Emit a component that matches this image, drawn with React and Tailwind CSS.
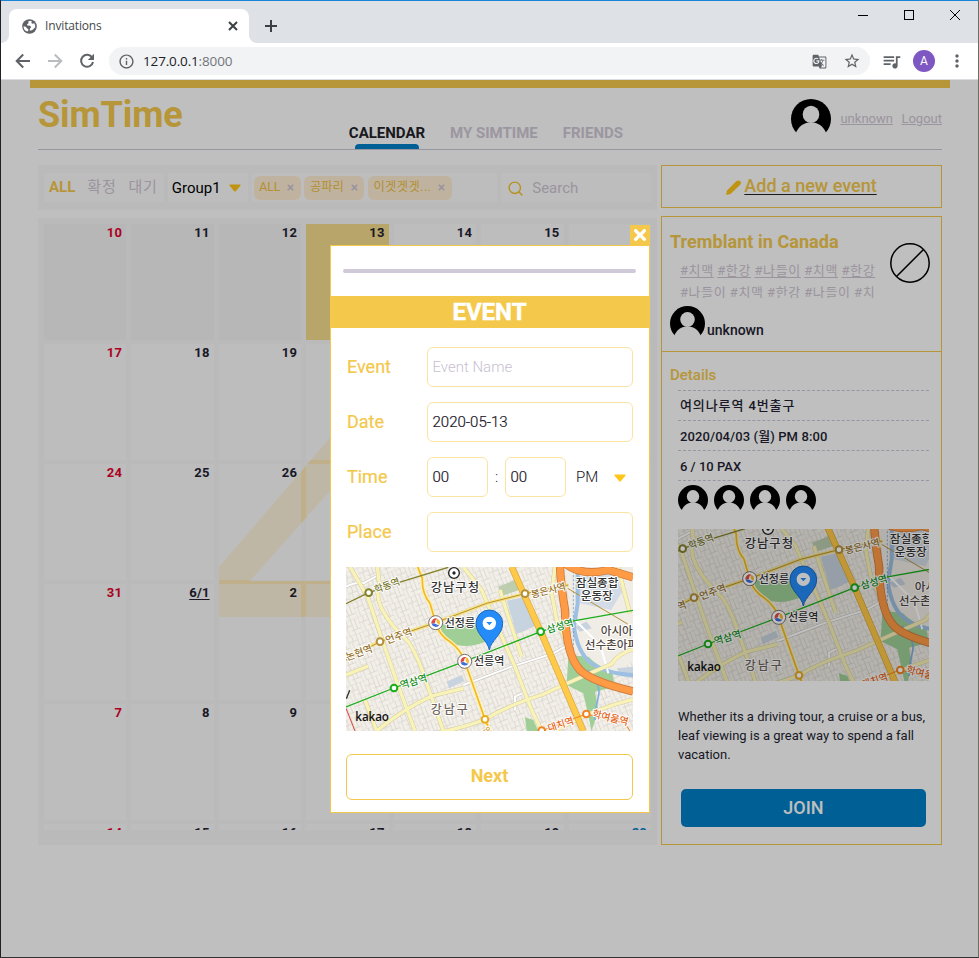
import React from "react";
import {
  MdInfoOutline,
  MdGTranslate,
  MdStarBorder,
  MdQueueMusic,
  MdMoreVert,
} from "react-icons/md";
import { FaTimes } from "react-icons/fa";
import { FiSearch } from "react-icons/fi";

function Globe() {
  return (
    <svg className="size-[15px]" viewBox="0 0 15 15">
      <circle cx="7.5" cy="7.500" r="7.300" fill="#5f6368" />
      <path d="M8 1.800L6.200 2.600L6.600 4.200L5 5.200L5.400 6.600L8.200 6.800L9.200 8.200L8 9.400L7.600 11.400Q9.600 11.800 11 10.400L13.200 8.200Q13.500 6 12.300 4.300L10.600 4.800L9.200 4L10 2.400Z" fill="#fff" />
      <path d="M1.500 7.200L3.800 7.800L5.200 9.400L6.400 10.200L6 12.600Q1.500 12 1.500 7.200Z" fill="#fff" />
    </svg>
  );
}

function LineIcon({ d, className }) {
  return (
    <svg className={className} viewBox="0 0 20 20" fill="none" stroke="currentColor" strokeWidth="2">
      <path d={d} />
    </svg>
  );
}

function BrowserChrome() {
  return (
    <div className="h-[80px] shrink-0 border-t border-[#1883d7] bg-[#dee1e6] font-['Open_Sans',sans-serif]">
      <div className="flex h-[42px] items-end">
        <div className="flex h-[42px] w-[8px] items-end bg-white">
          <div className="h-full w-full rounded-br-[8px] bg-[#dee1e6]" />
        </div>
        <div className="flex h-[34px] w-[240px] items-center rounded-t-[8px] bg-white pl-[13px] pr-[6px]">
          <Globe />
          <span className="ml-[8px] flex-1 text-[12px] tracking-[-0.15px] text-[#45494d]">Invitations</span>
          <LineIcon className="size-[20px] text-[#3c4043]" d="M6 6L14 14M14 6L6 14" />
        </div>
        <div className="h-[34px] w-[8px] bg-white">
          <div className="h-full w-full rounded-bl-[8px] bg-[#dee1e6]" />
        </div>
        <div className="flex h-[34px] items-center pl-[4px]">
          <LineIcon className="size-[20px] text-[#3c4043]" d="M10 4V16M4 10H16" />
        </div>
        <div className="ml-auto flex h-[42px] items-start gap-[36px] pr-[18px] pt-[9px]">
          <svg className="size-[10px]" viewBox="0 0 10 10"><path d="M0 5.5H10" stroke="#000" /></svg>
          <svg className="size-[10px]" viewBox="0 0 10 10"><rect x=".5" y=".5" width="9" height="9" fill="none" stroke="#000" /></svg>
          <svg className="size-[10px]" viewBox="0 0 10 10"><path d="M0 0L10 10M10 0L0 10" stroke="#000" /></svg>
        </div>
      </div>
      <div className="flex h-[37px] items-center border-b border-[#dadce0] bg-white text-[#5f6368]">
        <LineIcon className="ml-[12px] size-[20px]" d="M17 10H4M10.200 3.500L3.700 10L10.200 16.500" />
        <LineIcon className="ml-[12px] size-[20px] text-[#babcbe]" d="M3 10H16M9.800 3.500L16.300 10L9.800 16.500" />
        <svg className="ml-[12px] size-[20px]" viewBox="0 0 20 20">
          <path d="M15.200 6.600A6 6 0 1 0 16 11" fill="none" stroke="currentColor" strokeWidth="2" />
          <path d="M17 2.800V9H10.800Z" fill="currentColor" />
        </svg>
        <div className="ml-[12px] flex h-[28px] w-[761px] items-center rounded-full bg-[#f1f3f4] pl-[9px] pr-[9px]">
          <MdInfoOutline className="size-[17px]" />
          <span className="ml-[8px] text-[13.5px] tracking-[-0.15px] text-[#202124]">
            127.0.0.1<span className="text-[#72767a]">:8000</span>
          </span>
          <MdGTranslate className="ml-auto size-[15px]" />
          <MdStarBorder className="ml-[16px] size-[18px]" />
        </div>
        <MdQueueMusic className="ml-[11px] size-[21px]" />
        <div className="ml-[11px] flex size-[22px] items-center justify-center rounded-full bg-[#7e57c2] font-[Roboto] text-[12px] text-white">A</div>
        <MdMoreVert className="ml-[12px] size-[20px]" />
      </div>
    </div>
  );
}

function Avatar({ className }) {
  return (
    <svg className={className} viewBox="0 0 40 40">
      <circle cx="20" cy="20" r="20" fill="#000" />
      <ellipse cx="20" cy="15.4" rx="8.3" ry="8.6" fill="#fff" />
      <path d="M4.600 34.500C8 26.500 13 23.400 20 23.400S32 26.500 35.400 34.500L31 41H9Z" fill="#fff" />
    </svg>
  );
}

function Caret({ className }) {
  return (
    <svg className={className} viewBox="0 0 12 8">
      <path d="M1 .5H11Q12 .8 11.4 1.8L7 7Q6 8 5 7L.6 1.8Q0 .8 1 .5Z" fill="#ffc61a" />
    </svg>
  );
}

function Station({ x, y, color }) {
  return <circle cx={x} cy={y} r="10" fill="#fff" stroke={color} strokeWidth="6" />;
}

function Transfer({ x, y }) {
  return (
    <g transform={`translate(${x} ${y})`}>
      <circle r="21" fill="#fff" stroke="#766f68" strokeWidth="3" />
      <path d="M-12 4A13 13 0 0 1 5 -12Q-3 -8 -2 0Q-6 1 -12 4Z" fill="#e04b45" />
      <path d="M5 -12A13 13 0 0 1 11 7Q5 4 3 -2Q2 -8 5 -12Z" fill="#f8b830" />
      <path d="M-12 4Q-5 0 -1 3Q4 7 11 7A13 13 0 0 1 -12 4Z" fill="#416fd8" />
    </g>
  );
}

function Label({ x, y, size = 30, color = "#333", rotate = 0, spacing = 0, children }) {
  return (
    <text
      transform={`translate(${x} ${y}) rotate(${rotate})`}
      fontSize={size}
      fill={color}
      stroke="#fff"
      strokeWidth="6"
      strokeLinejoin="round"
      paintOrder="stroke"
      fontWeight="500"
      letterSpacing={spacing}
      className="font-['Noto_Sans_CJK_KR',sans-serif]"
    >
      {children}
    </text>
  );
}

function KakaoMap({ id, viewBox, logoX, logoY, className }) {
  const roads = [
    "M45 21L98 110L145 250L185 365L240 513",
    "M127 21L133 70Q120 110 145 155Q170 200 220 245Q250 290 275 370L325 513",
    "M385 21L440 90L470 160L540 320L590 450L620 513",
    "M495 90L520 170L560 290",
    "M90 420L125 513",
    "M125 513Q200 450 290 408L385 385",
    "M300 520Q400 500 450 478Q520 435 620 405Q740 350 830 312Q850 280 894 268",
    "M660 513Q780 445 894 418",
    "M660 21L650 100L665 180L700 260",
    "M850 21L865 85L885 160",
    "M33 345L100 318",
  ];
  return (
    <svg className={className} viewBox={viewBox}>
      <defs>
        <pattern id={id} width="52" height="46" patternUnits="userSpaceOnUse" patternTransform="rotate(-21)">
          <path d="M0 0H52M0 18H30M22 33H52M0 0V46M16 0V18M30 0V46M42 0V33M12 18V46" fill="none" stroke="#d6d1cb" strokeWidth="2.2" />
        </pattern>
      </defs>
      <g transform="scale(.33333) translate(-33 -21)">
        <rect x="33" y="21" width="861" height="492" fill="#f2efe9" />
        <rect x="33" y="21" width="861" height="492" fill={`url(#${id})`} />
        <path d="M690 21H894V300L850 340L750 330L715 250Z" fill="#f0ede7" />
        <path d="M318 190Q365 210 400 190L440 190L465 238Q420 265 365 255Q335 240 318 220Z" fill="#9fcf96" />
        <path d="M490 80L545 58L553 90L500 108Z" fill="#bdceaf" />
        <path d="M515 122L573 110L607 195L545 222Z" fill="#c8d3e0" />
        <path d="M720 50L840 40L862 95L828 150L735 130Z" fill="#d3dce6" />
        <path d="M720 200L755 185L770 205L735 215ZM335 365L380 345L388 362L342 385Z" fill="#c8d3e0" />
        <path d="M845 325L894 320V355L860 348Z" fill="#c8d3e0" />
        <path d="M700 285L760 290Q795 325 830 330L840 380L780 395L790 450L770 513L745 400L695 375Z" fill="#9fcf96" />
        <path d="M570 472L595 480L610 513H575Z" fill="#9fcf96" />
        <path d="M705 21H728V130L717 200Q728 280 770 310T894 345" fill="none" stroke="#9dbfe2" strokeWidth="12" />
        <path d="M760 330Q800 375 790 410T780 480" fill="none" stroke="#80aede" strokeWidth="5" />
        <path d="M715 21V280" fill="none" stroke="#608ec4" strokeWidth="2" strokeDasharray="7 5" />
        <g fill="none" stroke="#c9c5bf" strokeWidth="9">
          <path d="M385 375L530 320L655 280L690 260L692 205M540 450V410L560 400M33 80Q60 65 85 70L130 45" />
        </g>
        <g fill="none" stroke="#fff" strokeWidth="6">
          <path d="M385 375L530 320L655 280L690 260L692 205M540 450V410L560 400M33 80Q60 65 85 70L130 45M720 180L790 250M800 270L820 340" />
        </g>
        {roads.map((d) => <path key={d} d={d} fill="none" stroke="#d3cda6" strokeWidth="13" />)}
        {roads.map((d) => <path key={d} d={d} fill="none" stroke="#faf3b8" strokeWidth="10" />)}
        <path d="M530 21L617 215L745 513" fill="none" stroke="#d9a63c" strokeWidth="20" />
        <path d="M530 21L617 215L745 513" fill="none" stroke="#ffca4a" strokeWidth="16" />
        <path d="M33 292L135 245L302 188L455 130L570 101L700 75" fill="none" stroke="#f7e27e" strokeWidth="10" />
        <g fill="none" strokeLinejoin="round">
          <path d="M675 21Q678 80 690 150Q692 285 735 330Q770 365 894 394M690 10Q740 50 820 30L894 52" stroke="#cf7d40" strokeWidth="25" />
          <path d="M675 21Q678 80 690 150Q692 285 735 330Q770 365 894 394M690 10Q740 50 820 30L894 52" stroke="#ff9b45" strokeWidth="20" />
          <path d="M248 21L262 55Q260 100 285 130L302 188Q312 225 345 245Q378 270 389 304L450 478L465 513" stroke="#fff2b0" strokeWidth="12" />
          <path d="M248 21L262 55Q260 100 285 130L302 188Q312 225 345 245Q378 270 389 304L450 478L465 513" stroke="#f3b824" strokeWidth="5" />
          <path d="M33 131L101 98L200 65L340 22" stroke="#82812b" strokeWidth="4" />
          <path d="M33 300L135 245L302 188L455 130L570 101L700 75M698 85L878 192" stroke="#b4913a" strokeWidth="3" />
          <path d="M33 441L177 384L389 304L617 215L720 182L894 151" stroke="#1bad1b" strokeWidth="4" />
          <path d="M620 512L754 462L870 490L885 513" stroke="#f58220" strokeWidth="3" />
          <path d="M33 445L60 513" stroke="#d9423c" strokeWidth="3" />
        </g>
        <Label x={122} y={100} size={29} rotate={-20} color="#77772c">학동역</Label>
        <Label x={156} y={252} size={30} rotate={-20} color="#957127">언주역</Label>
        <Label x={37} y={302} size={30} rotate={-20} color="#957127">논현역</Label>
        <Label x={591} y={114} size={29} rotate={-14} color="#957127">봉은사역</Label>
        <Label x={199} y={386} size={30} rotate={-16} color="#128c18">역삼역</Label>
        <Label x={638} y={220} size={30} rotate={-16} color="#128c18">삼성역</Label>
        <Label x={642} y={515} size={29} rotate={-18} color="#e5661a">대치역</Label>
        <Label x={770} y={470} size={30} rotate={14} color="#e5661a">학여울역</Label>
        <Label x={287} y={95} size={37} spacing={3}>강남구청</Label>
        <Label x={329} y={200} size={33}>선정릉</Label>
        <Label x={417} y={316} size={33}>선릉역</Label>
        <Label x={287} y={461} size={36} spacing={6} color="#70645c">강남구</Label>
        <Label x={722} y={81} size={35}>잠실종합</Label>
        <Label x={737} y={120} size={35}>운동장</Label>
        <Label x={797} y={224} size={35} color="#51473f">아시아</Label>
        <Label x={749} y={268} size={35} color="#51473f">선수촌아파</Label>
        <Label x={444} y={506} size={24} rotate={62} color="#d2951c">안</Label>
        <Station x={101} y={98} color="#82812b" />
        <Station x={135} y={245} color="#b4913a" />
        <Station x={570} y={101} color="#b4913a" />
        <Station x={177} y={384} color="#1bad1b" />
        <Station x={617} y={215} color="#1bad1b" />
        <Station x={450} y={478} color="#e8ac20" />
        <Station x={754} y={462} color="#f58220" />
        <Station x={620} y={512} color="#f58220" />
        <circle cx="357" cy="39" r="16" fill="#fff" stroke="#222" strokeWidth="4" />
        <circle cx="357" cy="39" r="5" fill="#222" />
        <path d="M34 416L44 391" stroke="#333" strokeWidth="4" />
        <Transfer x={302} y={188} />
        <Transfer x={389} y={304} />
        <path d="M463 270C458 240 423 225 423 190A40 40 0 0 1 503 190C503 225 468 240 463 270Z" fill="#258bf8" stroke="#1867bd" strokeWidth="3" />
        <circle cx="463" cy="190" r="20" fill="#fff" />
        <path d="M454 186H472L463 196Z" fill="#258bf8" />
        <text x={logoX} y={logoY} fontSize="35" fontWeight="600" letterSpacing="-.3" fill="#111" className="font-['Open_Sans',sans-serif]">kakao</text>
      </g>
    </svg>
  );
}

function Header() {
  return (
    <header className="mx-[8px] flex h-[62px] justify-between border-b border-[#c9c7d6]">
      <h1 className="w-[311px] pt-[5px] text-[36px] font-bold leading-[44px] tracking-[-0.1px] text-[#f3c84b]">SimTime</h1>
      <nav className="flex flex-1 gap-[25px] pt-[35px] text-[15px] font-bold leading-[20px] text-[#d0c9d6]">
        <div className="flex h-[26px] w-[76px] flex-col items-center">
          <span className="text-[#222229]">CALENDAR</span>
          <span className="mt-[1px] h-[5px] w-[64px] rounded-t-[4px] bg-[#0080c8]" />
        </div>
        <span>MY SIMTIME</span>
        <span>FRIENDS</span>
      </nav>
      <div className="flex h-[61px] items-center text-[13px] text-[#cfc6d3]">
        <Avatar className="size-[40px]" />
        <a className="ml-[9px] underline">unknown</a>
        <a className="ml-[8.5px] underline">Logout</a>
      </div>
    </header>
  );
}

function Chip({ children }) {
  return (
    <span className="flex h-[24px] items-center gap-[6px] whitespace-nowrap rounded-[6px] bg-[#ffefd5] px-[5.5px] text-[12.3px] text-[#f0bf45]">
      {children}
      <FaTimes className="size-[9px] text-[#cfc6d3]" />
    </span>
  );
}

function FilterBar() {
  return (
    <div className="flex h-[45px] gap-[4px] bg-[#f9f9f9] px-[6px] py-[8px]">
      <div className="flex w-[120px] items-center gap-[12px] bg-[#fdfdfd] pl-[5px] text-[15px] text-[#cfc6d3]">
        <b className="text-[#f3c84b]">ALL</b>
        <span className="tracking-[0.8px]">확정</span>
        <span className="tracking-[0.8px]">대기</span>
      </div>
      <div className="flex w-[80px] items-center bg-[#fdfdfd] pl-[4px] pt-px text-[15px] text-black">
        Group1
        <Caret className="ml-[8px] h-[8px] w-[12px]" />
      </div>
      <div className="flex w-[246px] items-center gap-[3.5px] bg-[#fdfdfd] pl-[2px]">
        <Chip>ALL</Chip>
        <Chip>공파리</Chip>
        <Chip><span className="tracking-[0.4px]">이겟겟겟...</span></Chip>
      </div>
      <div className="flex w-[150px] items-center gap-[8px] bg-[#fdfdfd] pl-[6px] pt-px text-[15px] text-[#cfc6d3]">
        <FiSearch className="size-[17px] text-[#f3c330]" />
        Search
      </div>
    </div>
  );
}

const days = [
  "10", "11", "12", "13", "14", "15", "16",
  "17", "18", "19", "20", "21", "22", "23",
  "24", "25", "26", "27", "28", "29", "30",
  "31", "6/1", "2", "3", "4", "5", "6",
  "7", "8", "9", "10", "11", "12", "13",
  "14", "15", "16", "17", "18", "19", "20",
];

function dayBackground(i) {
  if (i < 3) return "bg-[#f5f5f5]";
  if (i === 3) return "bg-[#f5dc8d]";
  return "bg-white/50";
}

function dayColor(i) {
  if (i % 7 === 0) return "text-[#e6002d]";
  if (i % 7 === 6) return "text-[#0080c8]";
  return "text-[#241f33]";
}

function Calendar() {
  return (
    <div className="relative mt-[8px] h-[627px] bg-[#f9f9f9] px-[6px] pt-[6px]">
      <svg className="absolute left-[181px] top-[150px] h-[260px] w-[300px]" viewBox="0 0 300 260">
        <path d="M0 199L171 0H218V213H260V249H0ZM31 213H170V56Z" fill="#ffeab8" fillRule="evenodd" />
      </svg>
      <div className="relative h-[606px] overflow-hidden">
        <div className="grid auto-rows-[116px] grid-cols-7 gap-x-[5.300px] gap-y-[4px]">
          {days.map((day, i) => (
            <div key={i} className={`${dayBackground(i)} ${dayColor(i)} pr-[4px] text-right text-[13px] font-bold leading-[18px] tracking-[0.2px]`}>
              <span className={day === "6/1" ? "underline underline-offset-2" : ""}>{day}</span>
            </div>
          ))}
        </div>
      </div>
    </div>
  );
}

function Sidebar() {
  return (
    <aside className="w-[281px]">
      <div className="flex h-[43px] items-center justify-center border border-[#f3c84b] pb-[2px] text-[18px] font-medium text-[#f3c84b]">
        <svg className="mr-[3px] mt-[3px] size-[15px]" viewBox="0 0 15 15">
          <path d="M0 15L1 10.500L10 1.500Q12-.4 14 1T14 5L4.500 14Z" fill="#ffc61a" />
        </svg>
        <a className="underline decoration-[#222] decoration-1 underline-offset-[2px]">Add a new event</a>
      </div>
      <div className="mt-[8px] h-[629px] border border-[#f3c84b]">
        <div className="h-[135px] border-b border-[#f3c84b] px-[8px] pt-[13px]">
          <div className="flex">
            <div className="w-[220px]">
              <h2 className="text-[18px] font-bold leading-[24px] tracking-[0.05px] text-[#f3c84b]">Tremblant in Canada</h2>
              <div className="ml-[10px] mt-[6px] h-[38px] w-[200px] overflow-hidden whitespace-nowrap text-[13px] leading-[22px] tracking-[0.6px] text-[#cfc6d3]">
                <p className="flex gap-[3.500px]">
                  {["#치맥", "#한강", "#나들이", "#치맥", "#한강"].map((tag, i) => <a key={i} className="underline underline-offset-2">{tag}</a>)}
                </p>
                <p className="flex gap-[3.500px]">
                  {["#나들이", "#치맥", "#한강", "#나들이", "#치"].map((tag, i) => <a key={i}>{tag}</a>)}
                </p>
              </div>
            </div>
            <svg className="mt-[13px] size-[40px]" viewBox="0 0 40 40">
              <circle cx="20" cy="20" r="19.2" fill="none" stroke="#000" strokeWidth="1.5" />
              <path d="M33.500 6.500L6.500 33.500" stroke="#000" strokeWidth="1.5" />
            </svg>
          </div>
          <div className="mt-[8px] flex gap-[2px] text-[14px] font-medium text-[#241f33]">
            <Avatar className="size-[35px]" />
            <span className="pt-[14px]">unknown</span>
          </div>
        </div>
        <div className="px-[8px] pt-[13px]">
          <h3 className="text-[15px] font-medium leading-[20px] text-[#f3c84b]">Details</h3>
          <ul className="ml-[8px] mt-[5px] w-[251px] border-b border-dashed border-[#c9c7d6] text-[13px] font-medium text-[#241f33]">
            <li className="flex h-[30px] items-center border-t border-dashed border-[#c9c7d6] pl-[2px] pt-px tracking-[0.9px]">여의나루역 4번출구</li>
            <li className="flex h-[30px] items-center border-t border-dashed border-[#c9c7d6] pl-[2px] pt-[2px] tracking-[0.1px]">2020/04/03 (월) PM 8:00</li>
            <li className="flex h-[30px] items-center border-t border-dashed border-[#c9c7d6] pl-[2px] pt-[2px]">6 / 10 PAX</li>
          </ul>
          <div className="ml-[8px] mt-[4px] flex gap-[6px]">
            <Avatar className="size-[30px]" />
            <Avatar className="size-[30px]" />
            <Avatar className="size-[30px]" />
            <Avatar className="size-[30px]" />
          </div>
          <KakaoMap id="side-blocks" viewBox="18 6 251 152" logoX={115} logoY={465} className="ml-[8px] mt-[14px] h-[152px] w-[251px]" />
          <p className="ml-[8px] mt-[26px] w-[255px] text-[13px] leading-[19px] text-[#241f33]">
            Whether its a driving tour, a cruise or a bus, leaf viewing is a great way to spend a fall vacation.
          </p>
          <button className="ml-[11px] mt-[25px] h-[38px] w-[245px] rounded-[5px] bg-[#0080c8] pb-[2px] text-[18px] font-medium text-white">JOIN</button>
        </div>
      </div>
    </aside>
  );
}

function Field({ label, children }) {
  return (
    <div className="flex h-[40px] items-center">
      <label className="w-[81px] pb-[2px] pl-px text-[18px] font-normal text-[#f3c84b] [-webkit-text-stroke:0.2px_#f3c84b]">{label}</label>
      {children}
    </div>
  );
}

const inputStyle = "flex h-[40px] items-center rounded-[6px] border border-[#fae4a2] pl-[4.500px]";

function EventModal() {
  return (
    <div className="absolute left-[329px] top-[145px] w-[320px]">
      <button className="ml-auto flex h-[20px] w-[20px] items-center justify-center bg-[#f3c84b]">
        <FaTimes className="size-[18px] text-white" />
      </button>
      <div className="h-[568px] border border-[#f3c84b] bg-white">
        <div className="ml-[12px] mr-[13px] mt-[23px] h-[4px] rounded-[2px] bg-[#cfc9d8]" />
        <h2 className="mt-[23px] h-[32px] bg-[#f3c84b] pr-px text-center text-[24px] font-bold leading-[32px] text-white [-webkit-text-stroke:0.5px_#fff]">EVENT</h2>
        <div className="flex flex-col gap-[15px] pl-[15px] pr-[16px] pt-[19px] text-[15px] font-light text-[#17131f]">
          <Field label="Event"><div className={`${inputStyle} w-[206px] text-[#c7c0d1]`}>Event Name</div></Field>
          <Field label="Date"><div className={`${inputStyle} w-[206px] [-webkit-text-stroke:0.2px]`}>2020-05-13</div></Field>
          <Field label="Time">
            <div className={`${inputStyle} w-[61px] [-webkit-text-stroke:0.2px]`}>00</div>
            <span className="w-[17px] text-center">:</span>
            <div className={`${inputStyle} w-[61px] [-webkit-text-stroke:0.2px]`}>00</div>
            <span className="ml-[10px]">PM</span>
            <Caret className="ml-[16px] mt-[2px] h-[8px] w-[12px]" />
          </Field>
          <Field label="Place"><div className={`${inputStyle} w-[206px]`} /></Field>
          <KakaoMap id="modal-blocks" viewBox="0 0 287 164" logoX={61} logoY={483} className="h-[164px] w-[287px]" />
          <button className="mt-[8px] h-[46px] rounded-[6px] border border-[#f3c84b] pb-[3px] text-[18px] font-bold text-[#f3c84b]">Next</button>
        </div>
      </div>
    </div>
  );
}

export default function App() {
  return (
    <div className="flex h-[958px] w-[979px] flex-col overflow-hidden border-b border-l border-r border-b-[#303030] border-l-[#202124] border-r-[#6b6d62]">
      <BrowserChrome />
      <div className="relative flex-1 bg-white font-[Roboto,'Noto_Sans_CJK_KR',sans-serif]">
        <div className="ml-[29px] w-[920px] border-t-8 border-[#f3c84b]">
          <Header />
          <main className="mx-[8px] mt-[15px] flex gap-[4px]">
            <div className="w-[619px]">
              <FilterBar />
              <Calendar />
            </div>
            <Sidebar />
          </main>
        </div>
        <div className="absolute inset-0 bg-black/25" />
        <EventModal />
      </div>
    </div>
  );
}
